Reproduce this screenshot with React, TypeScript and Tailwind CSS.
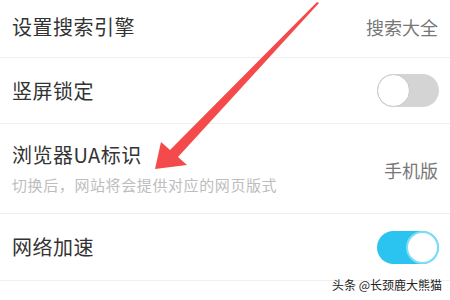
import React from 'react';

const cjk = { fontFamily: '"Noto Sans CJK SC", "Noto Sans", sans-serif' };

function Toggle({ on }: { on: boolean }) {
    return on ? (
        <div className="w-[62px] h-[33px] rounded-full bg-[#2bc4f1] flex justify-end">
            <div className="w-[33px] h-[33px] rounded-full bg-white border-2 border-[#7fdcf6]" />
        </div>
    ) : (
        <div className="w-[62px] h-[33px] rounded-full bg-[#d4d4d4] flex justify-start">
            <div className="w-[33px] h-[33px] rounded-full bg-white border border-[#c8c8c8]" />
        </div>
    );
}

export default function App() {
    return (
        <div className="relative w-[450px] h-[300px] bg-white overflow-hidden" style={cjk}>
            {/* 设置搜索引擎 */}
            <div className="h-[58px] flex items-center justify-between px-3 pb-[3px] border-b border-[#efefef]">
                <span className="text-[20px] tracking-[0.5px] text-[#333]">设置搜索引擎</span>
                <span className="text-[18px] text-[#777]">搜索大全</span>
            </div>

            {/* 竖屏锁定 */}
            <div className="h-[66px] flex items-center justify-between pl-3 pr-[11px] border-b border-[#efefef]">
                <span className="text-[20px] tracking-[0.5px] text-[#333]">竖屏锁定</span>
                <Toggle on={false} />
            </div>

            {/* 浏览器UA标识 */}
            <div className="h-[90px] flex items-center justify-between px-3 border-b border-[#efefef]">
                <div className="flex flex-col">
                    <span className="text-[20px] leading-[24px] tracking-[0.5px] text-[#333]">浏览器UA标识</span>
                    <span className="mt-[9px] text-[15px] leading-[18px] tracking-[0.6px] text-[#bdbdbd]">
                        切换后，网站将会提供对应的网页版式
                    </span>
                </div>
                <span className="text-[18px] text-[#777] mt-[3px]">手机版</span>
            </div>

            {/* 网络加速 */}
            <div className="h-[67px] flex items-center justify-between pl-3 pr-[11px] border-b border-[#efefef]">
                <span className="text-[20px] tracking-[0.5px] text-[#333]">网络加速</span>
                <Toggle on={true} />
            </div>

            {/* red arrow annotation */}
            <svg className="absolute left-0 top-0 pointer-events-none" width="450" height="300" viewBox="0 0 450 300">
                <polygon
                    points="155,169 161,142 170,150 317,2 319,3 178,157 187,165"
                    fill="#f44a4c"
                />
            </svg>

            {/* watermark */}
            <div
                className="absolute right-[8px] top-[277px] text-[12px] leading-[16px] text-[#222]"
                style={{ textShadow: '0 0 2px #fff, 0 0 2px #fff' }}
            >
                头条 @长颈鹿大熊猫
            </div>
        </div>
    );
}
